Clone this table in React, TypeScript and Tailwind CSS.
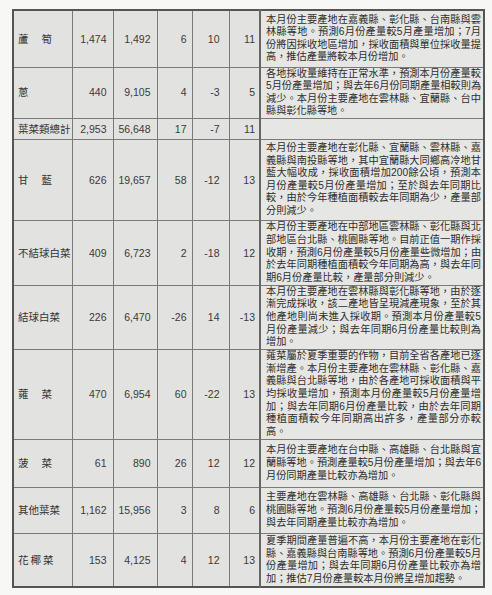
type Row = {
  name: string;
  nameCls?: string;
  h: string;
  v: string[];
  lines: string[];
};

const rows: Row[] = [
  { name: '蘆|筍', h: 'h-[57px]', v: ['1,474', '1,492', '6', '10', '11'], lines: [
    '本月份主要產地在嘉義縣、彰化縣、台南縣與雲',
    '林縣等地。預測6月份產量較5月產量增加；7月',
    '份將因採收地區增加，採收面積與單位採收量提',
    '高，推估產量將較本月份增加。',
  ] },
  { name: '蔥', h: 'h-[50px]', v: ['440', '9,105', '4', '-3', '5'], lines: [
    '各地採收量維持在正常水準，預測本月份產量較',
    '5月份產量增加；與去年6月份同期產量相較則為',
    '減少。本月份主要產地在雲林縣、宜蘭縣、台中',
    '縣與彰化縣等地。',
  ] },
  { name: '葉菜類總計', h: 'h-[21px]', v: ['2,953', '56,648', '17', '-7', '11'], lines: [] },
  { name: '甘|藍', h: 'h-[81px]', v: ['626', '19,657', '58', '-12', '13'], lines: [
    '本月份主要產地在彰化縣、宜蘭縣、雲林縣、嘉',
    '義縣與南投縣等地，其中宜蘭縣大同鄉高冷地甘',
    '藍大幅收成，採收面積增加200餘公頃，預測本',
    '月份產量較5月份產量增加；至於與去年同期比',
    '較，由於今年種植面積較去年同期為少，產量部',
    '分則減少。',
  ] },
  { name: '不結球白菜', h: 'h-[65px]', v: ['409', '6,723', '2', '-18', '12'], lines: [
    '本月份主要產地在中部地區雲林縣、彰化縣與北',
    '部地區台北縣、桃園縣等地。目前正值一期作採',
    '收期，預測6月份產量較5月份產量些微增加；由',
    '於去年同期種植面積較今年同期為高，與去年同',
    '期6月份產量比較，產量部分則減少。',
  ] },
  { name: '結球白菜', h: 'h-[62px]', v: ['226', '6,470', '-26', '14', '-13'], lines: [
    '本月份主要產地在雲林縣與彰化縣等地，由於逐',
    '漸完成採收，該二產地皆呈現減產現象，至於其',
    '他產地則尚未進入採收期。預測本月份產量較5',
    '月份產量減少；與去年同期6月份產量比較則為',
    '增加。',
  ] },
  { name: '蕹|菜', h: 'h-[90px]', v: ['470', '6,954', '60', '-22', '13'], lines: [
    '蕹菜屬於夏季重要的作物，目前全省各產地已逐',
    '漸增產。本月份主要產地在雲林縣、彰化縣、嘉',
    '義縣與台北縣等地，由於各產地可採收面積與平',
    '均採收量增加，預測本月份產量較5月份產量增',
    '加；與去年同期6月份產量比較，由於去年同期',
    '種植面積較今年同期高出許多，產量部分亦較',
    '高。',
  ] },
  { name: '菠|菜', h: 'h-[48px]', v: ['61', '890', '26', '12', '12'], lines: [
    '本月份主要產地在台中縣、高雄縣、台北縣與宜',
    '蘭縣等地。預測產量較5月份產量增加；與去年6',
    '月份同期產量比較亦為增加。',
  ] },
  { name: '其他葉菜', h: 'h-[46px]', v: ['1,162', '15,956', '3', '8', '6'], lines: [
    '主要產地在雲林縣、高雄縣、台北縣、彰化縣與',
    '桃園縣等地。預測6月份產量較5月份產量增加；',
    '與去年同期產量比較亦為增加。',
  ] },
  { name: '花 椰 菜', h: 'h-[54px]', v: ['153', '4,125', '4', '12', '13'], lines: [
    '夏季期間產量普遍不高，本月份主要產地在彰化',
    '縣、嘉義縣與台南縣等地。預測6月份產量較5月',
    '份產量增加；與去年同期6月份產量比較亦為增',
    '加；推估7月份產量較本月份將呈增加趨勢。',
  ] },
];

const pads = ['pr-[6px]', 'pr-[6px]', 'pr-[5px]', 'pr-[9px]', 'pr-[4px]'];

function Name({ name }: { name: string }) {
  if (name.includes('|')) {
    const [a, b] = name.split('|');
    return (
      <span className="flex gap-[13px]">
        <span>{a}</span>
        <span>{b}</span>
      </span>
    );
  }
  if (name.includes(' ')) {
    return <span className="tracking-[2px]">{name.replace(/ /g, '')}</span>;
  }
  return <span>{name}</span>;
}

export default function App() {
  return (
    <div className="w-[492px] h-[595px] bg-[#f7f7f5] pt-[9px] pl-[12px] font-['Liberation_Sans','Noto_Sans_CJK_TC',sans-serif] text-[#333]">
      <table className="table-fixed w-[471px] border-collapse border-2 border-[#555] bg-[#e2e2e0]">
        <colgroup>
          <col className="w-[59px]" />
          <col className="w-[41px]" />
          <col className="w-[44px]" />
          <col className="w-[35px]" />
          <col className="w-[37px]" />
          <col className="w-[31px]" />
          <col className="w-[224px]" />
        </colgroup>
        <tbody>
          {rows.map((r, i) => (
            <tr key={i} className={r.h}>
              <td className="border border-[#7a7a7a] pl-[4px] text-[10.5px] leading-none whitespace-nowrap align-middle">
                <Name name={r.name} />
              </td>
              {r.v.map((n, j) => (
                <td key={j} className={`border border-[#7a7a7a] text-right text-[10.5px] leading-none align-middle text-[#3a3a3a] ${pads[j]}`}>
                  {n}
                </td>
              ))}
              <td className="border border-[#7a7a7a] border-l-2 border-l-[#666] pl-[5px] pr-[2px] align-middle bg-[#e6e6e4]">
                <div className="text-[10.2px] leading-[12.6px] text-[#2e2e2e]">
                  {r.lines.map((l, k) => (
                    <div
                      key={k}
                      className={k < r.lines.length - 1 ? 'text-justify [text-align-last:justify] whitespace-nowrap' : 'whitespace-nowrap'}
                    >
                      {l}
                    </div>
                  ))}
                </div>
              </td>
            </tr>
          ))}
        </tbody>
      </table>
    </div>
  );
}
